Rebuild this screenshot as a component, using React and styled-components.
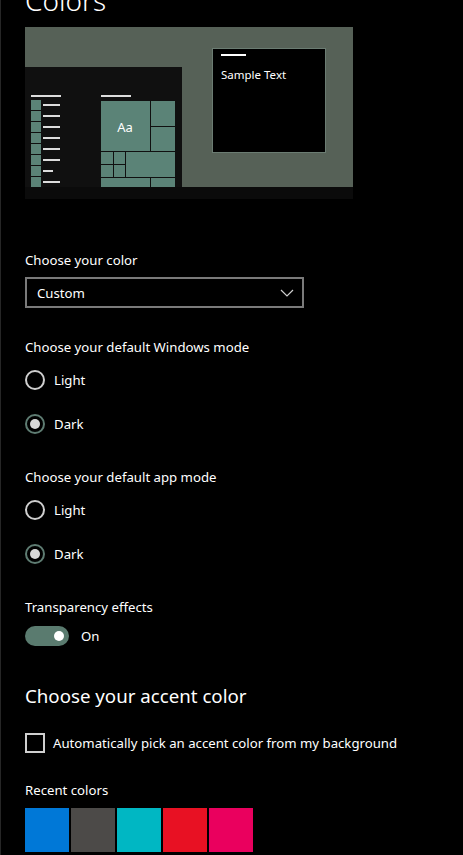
import React from 'react';
import styled, { createGlobalStyle } from 'styled-components';

const GlobalStyle = createGlobalStyle`
   html, body {
      margin: 0;
      padding: 0;
      background: #000;
   }
   * {
      box-sizing: border-box;
   }
`;

const Page = styled.div`
   width: 463px;
   height: 855px;
   overflow: hidden;
   background: #000;
   color: #fff;
   font-family: 'Noto Sans', 'Open Sans', sans-serif;
   font-size: 13.2px;
   border-left: 1px solid #262626;
   padding-left: 24px;
`;

const Title = styled.h1`
   margin: -20px 0 0;
   height: 47px;
   font-size: 28px;
   font-weight: 300;
   line-height: 40px;
`;

const Preview = styled.svg`
   display: block;
   width: 328px;
   height: 172px;
`;

const Label = styled.div`
   font-size: 13.2px;
   line-height: 20px;
   margin-top: ${(props) => props.$top || 0}px;
`;

const Select = styled.div`
   margin-top: 7px;
   width: 279px;
   height: 31px;
   border: 2px solid #7a7a7a;
   display: flex;
   align-items: center;
   justify-content: space-between;
   padding: 0 8px 0 10px;
`;

const RadioGroup = styled.div`
   display: flex;
   flex-direction: column;
   row-gap: 24px;
   margin-top: 13px;
`;

const RadioRow = styled.label`
   display: flex;
   align-items: center;
   column-gap: 9px;
   height: 20px;
`;

const RadioCircle = styled.span`
   width: 20px;
   height: 20px;
   border-radius: 50%;
   border: 2px solid ${(props) => (props.$checked ? '#5e7c72' : '#cfcfcf')};
   display: flex;
   align-items: center;
   justify-content: center;
   &::after {
      content: '';
      display: ${(props) => (props.$checked ? 'block' : 'none')};
      width: 10px;
      height: 10px;
      border-radius: 50%;
      background: #d8d8d8;
   }
`;

const ToggleRow = styled.div`
   display: flex;
   align-items: center;
   column-gap: 12px;
   margin-top: 9px;
`;

const Toggle = styled.span`
   width: 44px;
   height: 20px;
   border-radius: 10px;
   background: #5a7b6f;
   display: flex;
   align-items: center;
   justify-content: flex-end;
   padding-right: 5px;
   &::after {
      content: '';
      width: 10px;
      height: 10px;
      border-radius: 50%;
      background: #fff;
   }
`;

const Heading = styled.h2`
   margin: 36px 0 0;
   font-size: 18.7px;
   font-weight: 400;
   line-height: 28px;
`;

const CheckRow = styled.label`
   display: flex;
   align-items: center;
   column-gap: 8px;
   margin-top: 23px;
`;

const CheckBox = styled.span`
   width: 20px;
   height: 20px;
   border: 2px solid #cfcfcf;
`;

const Swatches = styled.div`
   display: flex;
   column-gap: 2px;
   margin-top: 8px;
`;

const Swatch = styled.span`
   width: 44px;
   height: 44px;
   background: ${(props) => props.$color};
`;

const sidebarLines = [78, 89, 100, 111, 122, 133, 144, 155];
const sidebarCells = [73, 84, 95, 106, 117, 128, 139, 150];
const recent = ['#0078d7', '#4c4a48', '#00b7c3', '#e81123', '#ea005e'];

const tile = '#5b8377';

const ColorPreview = () => (
   <Preview viewBox="0 0 328 172">
      <rect x="0" y="0" width="328" height="160" fill="#566157" />
      <rect x="0" y="160" width="328" height="12" fill="#0b0b0b" />
      <rect x="0" y="40" width="157" height="120" fill="#101010" />
      <rect x="6" y="68" width="30" height="2" fill="#dcdcdc" />
      {sidebarCells.map((y) => (
         <rect key={y} x="6" y={y} width="10" height="10" fill={tile} />
      ))}
      {sidebarLines.map((y, i) => (
         <rect key={y} x="18" y={y - 1} width={i === 6 ? 10 : 17} height="2" fill="#dcdcdc" />
      ))}
      <rect x="76" y="68" width="30" height="2" fill="#dcdcdc" />
      <rect x="76" y="74" width="49" height="50" fill={tile} />
      <text x="100" y="105" fill="#fff" fontSize="13" textAnchor="middle" fontFamily="Noto Sans, sans-serif">
         Aa
      </text>
      <rect x="126" y="74" width="24" height="25" fill={tile} />
      <rect x="126" y="100" width="24" height="24" fill={tile} />
      <rect x="76" y="125" width="12" height="12" fill={tile} />
      <rect x="89" y="125" width="11" height="12" fill={tile} />
      <rect x="76" y="138" width="12" height="12" fill={tile} />
      <rect x="89" y="138" width="11" height="12" fill={tile} />
      <rect x="101" y="125" width="49" height="25" fill={tile} />
      <rect x="76" y="151" width="49" height="9" fill={tile} />
      <rect x="126" y="151" width="24" height="9" fill={tile} />
      <rect x="187.5" y="21.5" width="113" height="104" fill="#000" stroke="#6b7c72" />
      <rect x="196" y="27" width="25" height="2" fill="#fff" />
      <text x="196" y="52" fill="#fff" fontSize="11.5" fontFamily="Noto Sans, sans-serif">
         Sample Text
      </text>
   </Preview>
);

const Radio = ({ label, checked }) => (
   <RadioRow>
      <RadioCircle $checked={checked} />
      {label}
   </RadioRow>
);

const App = () => {
   return (
      <Page>
         <GlobalStyle />
         <Title>Colors</Title>
         <ColorPreview />

         <Label $top={51}>Choose your color</Label>
         <Select>
            <span>Custom</span>
            <svg width="14" height="8" viewBox="0 0 14 8">
               <path d="M1 1 L7 7 L13 1" fill="none" stroke="#cfcfcf" strokeWidth="1.2" />
            </svg>
         </Select>

         <Label $top={29}>Choose your default Windows mode</Label>
         <RadioGroup>
            <Radio label="Light" />
            <Radio label="Dark" checked />
         </RadioGroup>

         <Label $top={33}>Choose your default app mode</Label>
         <RadioGroup>
            <Radio label="Light" />
            <Radio label="Dark" checked />
         </RadioGroup>

         <Label $top={33}>Transparency effects</Label>
         <ToggleRow>
            <Toggle />
            <span>On</span>
         </ToggleRow>

         <Heading>Choose your accent color</Heading>
         <CheckRow>
            <CheckBox />
            Automatically pick an accent color from my background
         </CheckRow>

         <Label $top={27}>Recent colors</Label>
         <Swatches>
            {recent.map((c) => (
               <Swatch key={c} $color={c} />
            ))}
         </Swatches>
      </Page>
   );
};

export default App;
